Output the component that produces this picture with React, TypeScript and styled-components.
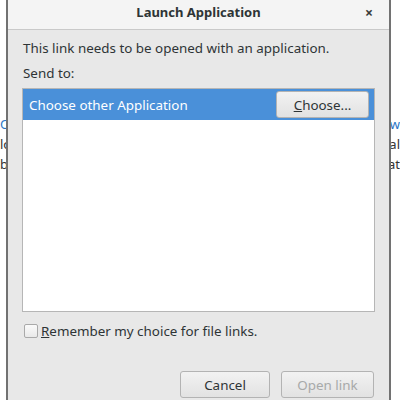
import styled, { createGlobalStyle } from "styled-components";

const GlobalStyle = createGlobalStyle`
  html, body {
    margin: 0;
    padding: 0;
    background: #ffffff;
    font-family: "Noto Sans", "DejaVu Sans", sans-serif;
  }
  #root {
    width: 400px;
    height: 400px;
    overflow: hidden;
  }
`;

const Page = styled.div`
  position: relative;
  width: 400px;
  height: 400px;
  overflow: hidden;
  background: #ffffff;
  padding-top: 114px;
  box-sizing: border-box;
`;

const PageText = styled.p<{ $link?: boolean }>`
  margin: 0;
  font-size: 13px;
  line-height: 20px;
  text-align: justify;
  text-align-last: justify;
  color: ${(p) => (p.$link ? "#2a76c6" : "#333333")};
`;

const Dialog = styled.div`
  position: absolute;
  left: 6px;
  top: 0;
  width: 385px;
  height: 410px;
  box-sizing: border-box;
  border-left: 2px solid #727272;
  border-right: 2px solid #727272;
  background: #e8e8e8;
  display: flex;
  flex-direction: column;
  color: #2e3436;
`;

const TitleBar = styled.div`
  height: 30px;
  flex-shrink: 0;
  display: flex;
  align-items: center;
  justify-content: center;
  position: relative;
  background: #f4f4f4;
  border-bottom: 1px solid #c9c9c9;
  box-sizing: border-box;
`;

const Title = styled.div`
  font-weight: bold;
  font-size: 13px;
  margin-top: -6px;
`;

const Close = styled.div`
  position: absolute;
  right: 16px;
  top: 3px;
  font-size: 14px;
  font-weight: bold;
  color: #3a3a3a;
`;

const Body = styled.div`
  flex: 1;
  display: flex;
  flex-direction: column;
  padding: 9px 14px 0 14px;
`;

const Label = styled.div`
  font-size: 13.4px;
  line-height: 18px;
  padding-left: 1px;
  margin-bottom: 7px;
`;

const ListBox = styled.div`
  height: 224px;
  box-sizing: border-box;
  border: 1px solid #b6b6b6;
  background: #ffffff;
  margin-top: -1px;
`;

const Row = styled.div<{ $selected?: boolean }>`
  height: 31px;
  display: flex;
  align-items: center;
  justify-content: space-between;
  padding: 0 5px 0 6px;
  background: ${(p) => (p.$selected ? "#4a90d9" : "transparent")};
  color: ${(p) => (p.$selected ? "#ffffff" : "#2e3436")};
  font-size: 13.4px;
`;

const Button = styled.button<{ $width: number }>`
  width: ${(p) => p.$width}px;
  height: 27px;
  box-sizing: border-box;
  border: 1px solid #b3b3b3;
  border-radius: 3px;
  background: linear-gradient(#f2f2f2, #e2e2e2);
  font-family: inherit;
  font-size: 13.4px;
  color: ${(p) => (p.disabled ? "#a7a9a9" : "#2e3436")};
  padding: 0;
  cursor: default;
  u {
    text-decoration-thickness: 1px;
  }
`;

const CheckRow = styled.label`
  display: flex;
  align-items: center;
  gap: 3px;
  margin-top: 10px;
  padding-left: 2px;
  font-size: 13.4px;
`;

const CheckBox = styled.span`
  width: 14px;
  height: 14px;
  flex-shrink: 0;
  box-sizing: border-box;
  border: 1px solid #a9a9a9;
  border-radius: 2px;
  background: linear-gradient(#fafafa, #e9e9e9);
`;

const Footer = styled.div`
  display: flex;
  justify-content: flex-end;
  gap: 11px;
  margin-top: 31px;
  padding-right: 1px;
`;

export default function App() {
  return (
    <>
      <GlobalStyle />
      <Page>
        <PageText $link>Open the attached document link in a new window now</PageText>
        <PageText>lorem ipsum dolor sit amet consectetur adipiscing elit sed al</PageText>
        <PageText>be lorem ipsum dolor sit amet consectetur adipiscing elit at</PageText>
        <Dialog>
          <TitleBar>
            <Title>Launch Application</Title>
            <Close>×</Close>
          </TitleBar>
          <Body>
            <Label>This link needs to be opened with an application.</Label>
            <Label>Send to:</Label>
            <ListBox>
              <Row $selected>
                <span>Choose other Application</span>
                <Button $width={93}>
                  <u>C</u>hoose...
                </Button>
              </Row>
            </ListBox>
            <CheckRow>
              <CheckBox />
              <span>
                <u>R</u>emember my choice for file links.
              </span>
            </CheckRow>
            <Footer>
              <Button $width={90}>Cancel</Button>
              <Button $width={93} disabled>
                Open link
              </Button>
            </Footer>
          </Body>
        </Dialog>
      </Page>
    </>
  );
}
